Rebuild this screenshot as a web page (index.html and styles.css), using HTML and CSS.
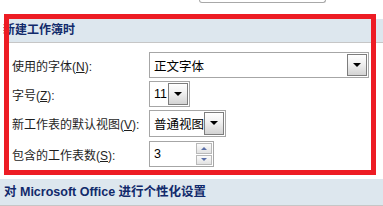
FILE: index.html
```html
<!DOCTYPE html>
<html lang="zh-CN">
<head>
    <meta charset="UTF-8">
    <title>Excel 选项</title>
    <link rel="stylesheet" href="styles.css">
</head>
<body>
    <div class="top-stub"></div>

    <div class="section-head">新建工作簿时</div>

    <div class="options">
        <div class="row">
            <label class="label">使用的字体(<u>N</u>):</label>
            <div class="combo combo-font">
                <span class="value">正文字体</span>
                <span class="drop"><i class="arrow"></i></span>
            </div>
        </div>
        <div class="row">
            <label class="label">字号(<u>Z</u>):</label>
            <div class="combo combo-size">
                <span class="value">11</span>
                <span class="drop"><i class="arrow"></i></span>
            </div>
        </div>
        <div class="row">
            <label class="label">新工作表的默认视图(<u>V</u>):</label>
            <div class="combo combo-view">
                <span class="value">普通视图</span>
                <span class="drop"><i class="arrow"></i></span>
            </div>
        </div>
        <div class="row row-last">
            <label class="label">包含的工作表数(<u>S</u>):</label>
            <div class="spin">
                <span class="value">3</span>
                <span class="spin-btns">
                    <span class="spin-btn"><i class="tri-up"></i></span>
                    <span class="spin-btn"><i class="tri-down"></i></span>
                </span>
            </div>
        </div>
    </div>

    <div class="section-head section-next">对 Microsoft Office 进行个性化设置</div>

    <!-- annotation frame drawn over the first section -->
    <div class="highlight"></div>
</body>
</html>
```

FILE: styles.css
```css
body {
    margin: 0;
    background-color: #fff;
    font-family: "Liberation Sans", "Noto Sans CJK SC", sans-serif;
    font-size: 12px;
    color: #1a1a1a;
    position: relative;
    width: 383px;
    height: 206px;
    overflow: hidden;
}

.top-stub {
    margin-left: 199px;
    width: 125px;
    height: 2px;
    border: 1px solid #a8a8a8;
    border-top: none;
    border-radius: 0 0 3px 3px;
}

.section-head {
    margin-top: 16px;
    margin-left: 4px;
    height: 23px;
    line-height: 23px;
    text-indent: -1px;
    background-color: #dde7ee;
    border-bottom: 1px solid #c6c6c6;
    color: #112a6b;
    font-weight: bold;
    font-size: 12px;
    white-space: nowrap;
}

.section-next {
    margin-top: 12px;
    margin-left: 0;
    height: 26px;
    line-height: 26px;
    text-indent: 4px;
    font-size: 12.5px;
}

.options {
    padding-top: 9px;
    display: flex;
    flex-direction: column;
    gap: 3px;
}

.row {
    display: flex;
    align-items: center;
    height: 26px;
}

.row-last {
    margin-top: 2px;
}

.label {
    box-sizing: border-box;
    flex-shrink: 0;
    width: 149px;
    padding-left: 12px;
    color: #1e1e1e;
    white-space: nowrap;
}

.label u {
    text-underline-offset: 1px;
}

.combo,
.spin {
    box-sizing: border-box;
    flex-shrink: 0;
    height: 26px;
    border: 1px solid #a6a6a6;
    background-color: #fff;
    display: flex;
    align-items: center;
    justify-content: space-between;
    padding: 1px;
    white-space: nowrap;
}

.combo-font {
    width: 220px;
}

.combo-size {
    width: 41px;
}

.combo-view {
    width: 77px;
    height: 27px;
}

.spin {
    width: 65px;
}

.value {
    padding-left: 3px;
    color: #000;
    font-size: 12.5px;
}

.drop {
    box-sizing: border-box;
    width: 20px;
    height: 100%;
    border: 1px solid #7d7d7d;
    background: linear-gradient(#ffffff, #f0f0f0 45%, #d3d3d3);
    display: flex;
    align-items: center;
    justify-content: center;
}

.arrow {
    width: 0;
    height: 0;
    border-left: 4px solid transparent;
    border-right: 4px solid transparent;
    border-top: 4px solid #000;
    margin-top: -1px;
}

.spin-btns {
    display: flex;
    flex-direction: column;
    gap: 1px;
    height: 100%;
}

.spin-btn {
    box-sizing: border-box;
    width: 16px;
    flex: 1;
    border: 1px solid #b9b9b9;
    background: linear-gradient(#fbfbfb, #e2e2e2);
    display: flex;
    align-items: center;
    justify-content: center;
}

.tri-up,
.tri-down {
    width: 0;
    height: 0;
    border-left: 3px solid transparent;
    border-right: 3px solid transparent;
}

.tri-up {
    border-bottom: 3px solid #5a6fa8;
}

.tri-down {
    border-top: 3px solid #5a6fa8;
}

.highlight {
    position: absolute;
    left: 4px;
    top: 14px;
    width: 362px;
    height: 151px;
    border: 5px solid #ed1c24;
    pointer-events: none;
}
```
